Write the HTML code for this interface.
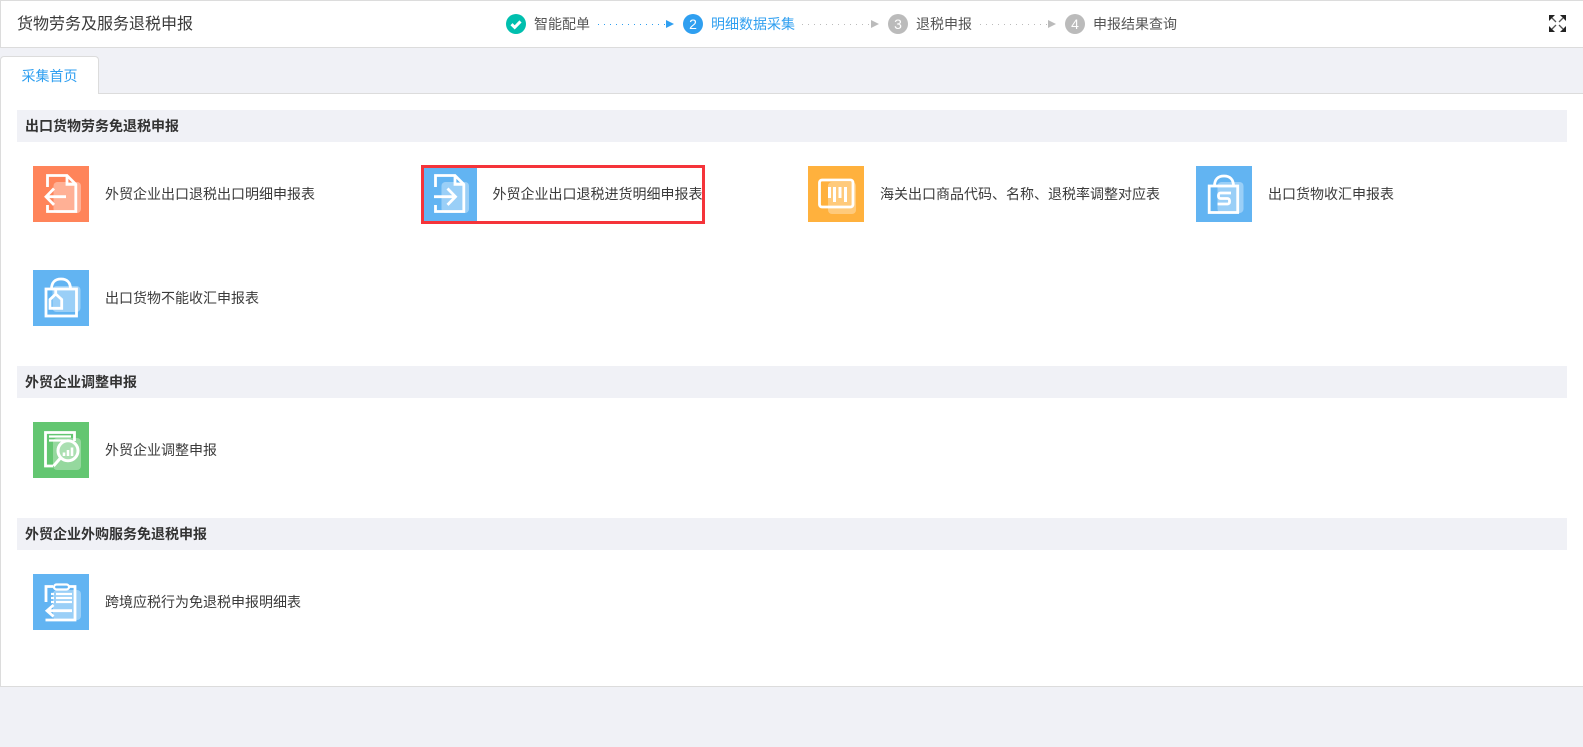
<!DOCTYPE html>
<html lang="zh-CN">
<head>
<meta charset="utf-8">
<title>货物劳务及服务退税申报</title>
<style>
html,body{margin:0;padding:0;width:1583px;height:747px;overflow:hidden;background:#f0f1f6;}
body{position:relative;font-family:"Liberation Sans","Noto Sans CJK SC",sans-serif;color:#3a3a3a;font-size:14px;}
.abs,.t,.sec,svg.i{position:absolute;}
.t{white-space:nowrap;line-height:20px;}
#hdr{position:absolute;left:0;top:0;width:1583px;background:#fff;border-top:1px solid #dcdcdc;border-bottom:1px solid #dcdcdc;box-sizing:content-box;height:46px;}
#hl{position:absolute;left:0;top:0;width:1px;height:48px;background:#dcdcdc;}
#main{position:absolute;left:0;top:93px;width:1583px;background:#fff;border-top:1px solid #dcdcdc;border-bottom:1px solid #dcdcdc;box-sizing:border-box;height:594px;}
#ml{position:absolute;left:0;top:93px;width:1px;height:594px;background:#dcdcdc;}
#tab{position:absolute;left:0;top:56px;width:99px;height:38px;background:#fff;border:1px solid #dcdcdc;border-bottom:none;border-radius:4px 4px 0 0;box-sizing:border-box;}
.sec{left:17px;width:1550px;height:32px;background:#f0f1f6;}
.sec span{position:absolute;left:8px;top:6px;line-height:20px;font-weight:bold;font-size:14px;color:#333;white-space:nowrap;}
svg.i{width:56px;height:56px;}
.num{position:absolute;width:20px;height:20px;border-radius:50%;color:#fff;text-align:center;line-height:20px;font-size:14px;top:14px;}
.dots{position:absolute;top:24px;height:1px;width:68px;background:repeating-linear-gradient(90deg,#bbb 0,#bbb 1px,transparent 1px,transparent 6px);}
.dots.b{background:repeating-linear-gradient(90deg,#2f9ff0 0,#2f9ff0 1px,transparent 1px,transparent 6px);}
.arr{position:absolute;top:20px;width:0;height:0;border-left:8px solid #bbb;border-top:4px solid transparent;border-bottom:4px solid transparent;}
#red{position:absolute;left:421px;top:165px;width:284px;height:59px;border:3px solid #f5343a;box-sizing:border-box;}
</style>
</head>
<body>
<div id="hdr"></div><div id="hl"></div>
<div class="t" style="left:17px;top:15px;font-size:16px;line-height:20px;color:#3a3a3a;">货物劳务及服务退税申报</div>

<svg class="i" style="left:506px;top:14px;width:20px;height:20px;" viewBox="0 0 20 20"><circle cx="10" cy="10" r="10" fill="#00bfae"/><path d="M5.500 10.200l3.200 3.200 5.800-6" fill="none" stroke="#fff" stroke-width="3"/></svg>
<div class="t" style="left:534px;top:14px;color:#555;">智能配单</div>
<div class="dots b" style="left:598px;"></div>
<div class="arr" style="left:666px;border-left-color:#2f9ff0;"></div>

<div class="num" style="left:683px;background:#2f9ff0;">2</div>
<div class="t" style="left:711px;top:14px;color:#2f9ff0;">明细数据采集</div>
<div class="dots" style="left:802px;"></div>
<div class="arr" style="left:871px;"></div>

<div class="num" style="left:888px;background:#bbb;">3</div>
<div class="t" style="left:916px;top:14px;color:#555;">退税申报</div>
<div class="dots" style="left:980px;"></div>
<div class="arr" style="left:1048px;"></div>

<div class="num" style="left:1065px;background:#bbb;">4</div>
<div class="t" style="left:1093px;top:14px;color:#555;">申报结果查询</div>

<svg class="i" style="left:1549px;top:15px;width:17px;height:17px;" viewBox="0 0 17 17"><g fill="#222"><path d="M0 0h6L0 6z"/><path d="M17 0h-6l6 6z"/><path d="M0 17h6l-6-6z"/><path d="M17 17h-6l6-6z"/></g><path d="M3 3l4 4M14 3l-4 4M3 14l4-4M14 14l-4-4" stroke="#555" stroke-width="1.300" fill="none"/></svg>

<div id="main"></div><div id="ml"></div>
<div id="tab"></div>
<div class="t" style="left:21.500px;top:66px;color:#2f9ff0;">采集首页</div>

<div class="sec" style="top:110px;"><span>出口货物劳务免退税申报</span></div>
<div class="sec" style="top:366px;"><span>外贸企业调整申报</span></div>
<div class="sec" style="top:518px;"><span>外贸企业外购服务免退税申报</span></div>

<!-- orange -->
<svg class="i" style="left:33px;top:166px;" viewBox="0 0 56 56"><rect width="56" height="56" fill="#ff845a"/><rect x="20.500" y="16" width="27.500" height="31" rx="4" fill="#fff" fill-opacity=".36"/><path d="M14.500 21V9.500h19.500l8.800 8.800V45.500H14.500V39M34 9.500V18.300h8.800" fill="none" stroke="#fff" stroke-width="2.800"/><path d="M14 30.700H33M21 22.500l-8 8.200 8 8.200" fill="none" stroke="#fff" stroke-width="2.800"/></svg>
<div class="t" style="left:105px;top:184px;">外贸企业出口退税出口明细申报表</div>

<!-- blue arrow right -->
<svg class="i" style="left:421px;top:166px;" viewBox="0 0 56 56"><rect width="56" height="56" fill="#62b4f2"/><rect x="20.500" y="16" width="27.500" height="31" rx="4" fill="#fff" fill-opacity=".36"/><path d="M14.500 21V9.500h19.500l8.800 8.800V45.500H14.500V39M34 9.500V18.300h8.800" fill="none" stroke="#fff" stroke-width="2.800"/><path d="M13 30.700H34M26.500 22.500l8 8.200-8 8.200" fill="none" stroke="#fff" stroke-width="2.800"/></svg>
<div class="t" style="left:492.500px;top:184px;">外贸企业出口退税进货明细申报表</div>
<div id="red"></div>

<!-- barcode -->
<svg class="i" style="left:808px;top:166px;" viewBox="0 0 56 56"><rect width="56" height="56" fill="#ffb13d"/><rect x="20" y="16" width="28" height="32" rx="4" fill="#fff" fill-opacity=".32"/><rect x="11.500" y="14" width="33.500" height="27" rx="2.500" fill="none" stroke="#fff" stroke-width="2.800"/><path d="M21.500 21v11M26.500 21v15M32 21v11M37.500 21v15" stroke="#fff" stroke-width="3" fill="none"/></svg>
<div class="t" style="left:880px;top:184px;">海关出口商品代码、名称、退税率调整对应表</div>

<!-- bag dollar -->
<svg class="i" style="left:1196px;top:166px;" viewBox="0 0 56 56"><rect width="56" height="56" fill="#62b4f2"/><rect x="21.500" y="16" width="26" height="31" rx="4" fill="#fff" fill-opacity=".36"/><rect x="13.200" y="20" width="28.500" height="26.500" fill="none" stroke="#fff" stroke-width="2.800"/><path d="M18.500 20c0-6.500 3.500-10 9.500-10s9.500 3.500 9.500 10" fill="none" stroke="#fff" stroke-width="2.800"/><path d="M35 27H24.500a2 2 0 0 0-2 2v1.500a2 2 0 0 0 2 2h7a2 2 0 0 1 2 2V36a2 2 0 0 1-2 2H21.500" fill="none" stroke="#fff" stroke-width="2.800"/></svg>
<div class="t" style="left:1268px;top:184px;">出口货物收汇申报表</div>

<!-- bag tag -->
<svg class="i" style="left:33px;top:270px;" viewBox="0 0 56 56"><rect width="56" height="56" fill="#62b4f2"/><rect x="19.500" y="16" width="28" height="26" rx="4" fill="#fff" fill-opacity=".36"/><rect x="13" y="19" width="30.500" height="27" fill="none" stroke="#fff" stroke-width="2.800"/><path d="M18.500 19c0-6.500 3.500-10 9.500-10s9.500 3.500 9.500 10" fill="none" stroke="#fff" stroke-width="2.800"/><path d="M22.700 19v5M22.700 24l6 5.500v8.800H17v-8.800z" fill="none" stroke="#fff" stroke-width="2.800"/></svg>
<div class="t" style="left:105px;top:288px;">出口货物不能收汇申报表</div>

<!-- green -->
<svg class="i" style="left:33px;top:422px;" viewBox="0 0 56 56"><rect width="56" height="56" fill="#63c671"/><rect x="20" y="16" width="28" height="32" rx="4" fill="#fff" fill-opacity=".32"/><path d="M20 44H12.500V10.500H41.500V19" fill="none" stroke="#fff" stroke-width="2.800"/><path d="M16 14.500H38M16 18.500H33" stroke="#fff" stroke-width="2.200" fill="none"/><circle cx="35" cy="28.700" r="10" fill="#fff" fill-opacity=".2" stroke="#fff" stroke-width="3"/><path d="M27.500 36L20.500 44" stroke="#fff" stroke-width="3" fill="none"/><path d="M31 34v-3.500M35 34v-6M39 34v-8.500" stroke="#fff" stroke-width="2.600" fill="none"/></svg>
<div class="t" style="left:105px;top:440px;">外贸企业调整申报</div>

<!-- clipboard -->
<svg class="i" style="left:33px;top:574px;" viewBox="0 0 56 56"><rect width="56" height="56" fill="#62b4f2"/><rect x="20" y="16" width="28" height="30" rx="4" fill="#fff" fill-opacity=".36"/><path d="M13 28V12.500H20M36 12.500H42V46H12.500" fill="none" stroke="#fff" stroke-width="2.800"/><rect x="21" y="10.500" width="15" height="5" rx="2.500" fill="none" stroke="#fff" stroke-width="2.200"/><path d="M18 20h3M18 24h3M18 28h3M23 20H39M23 24H39M23 28H39" stroke="#fff" stroke-width="2.200" fill="none"/><path d="M14 36.700H39M20.500 31l-6.500 5.700 6.500 5.700" fill="none" stroke="#fff" stroke-width="2.800"/></svg>
<div class="t" style="left:105px;top:592px;">跨境应税行为免退税申报明细表</div>
</body>
</html>
